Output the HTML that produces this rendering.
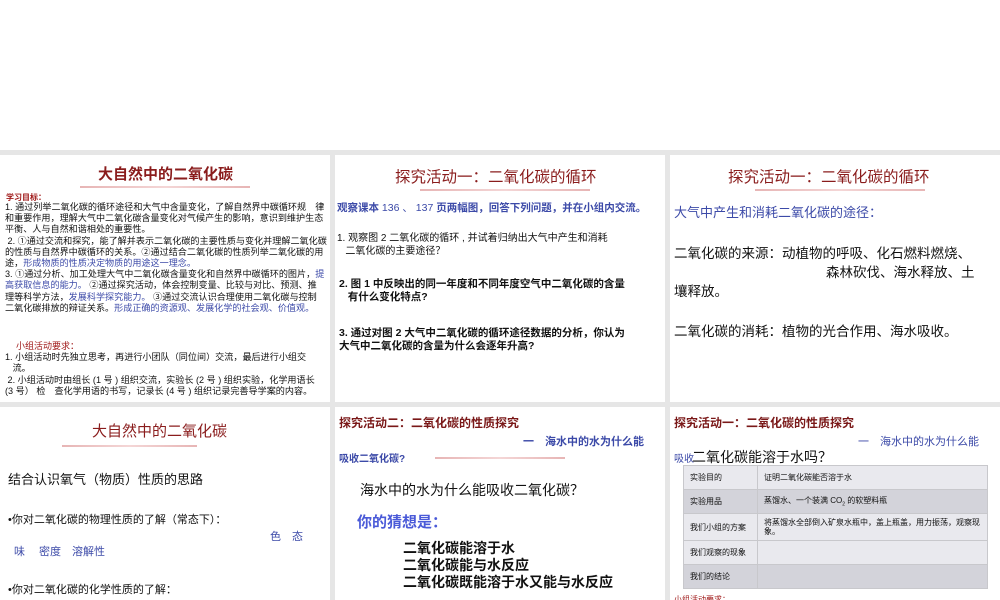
<!DOCTYPE html>
<html><head><meta charset="utf-8"><style>
*{margin:0;padding:0;box-sizing:border-box}
body{width:1000px;height:600px;overflow:hidden;background:#fff;position:relative;font-family:"Liberation Sans","Noto Sans CJK SC",sans-serif;color:#111}
.bg{position:absolute;left:0;top:150px;width:1000px;height:450px;background:#e6e6e6}
.s{position:absolute;background:#fff;overflow:hidden}
.a{position:absolute;white-space:nowrap}
.t{color:#8a1c1c;font-size:15px}
.u{position:absolute;height:2px;background:linear-gradient(90deg,#e7b5b5,#f4d6d6,#e7b5b5)}
.blue{color:#3c4aa8}
.red{color:#a01a1a}
.nw{white-space:nowrap}
table{border-collapse:collapse;font-size:8px}
td{border:1px solid #c8c8cc;height:24px;padding:0 6px}
</style></head><body>
<div class="bg"></div>

<div class="s" style="left:0;top:155px;width:330px;height:247px">
<div class="a t" style="left:98px;top:8px;font-weight:bold">大自然中的二氧化碳</div>
<div class="u" style="left:80px;top:31px;width:170px"></div>
<div class="a red" style="left:6px;top:37px;font-size:8px;font-weight:bold">学习目标：</div>
<div class="nw" style="position:absolute;left:5px;top:47px;font-size:9.1px;line-height:11.2px">
1. 通过列举二氧化碳的循环途径和大气中含量变化，了解自然界中碳循环规　律<br>
和重要作用，理解大气中二氧化碳含量变化对气候产生的影响，意识到维护生态<br>
平衡、人与自然和谐相处的重要性。<br>
&nbsp;2. ①通过交流和探究，能了解并表示二氧化碳的主要性质与变化并理解二氧化碳<br>
的性质与自然界中碳循环的关系。②通过结合二氧化碳的性质列举二氧化碳的用<br>
途，<span class="blue">形成物质的性质决定物质的用途这一理念。</span><br>
3. ①通过分析、加工处理大气中二氧化碳含量变化和自然界中碳循环的图片，<span class="blue">提</span><br>
<span class="blue">高获取信息的能力。</span> ②通过探究活动，体会控制变量、比较与对比、预测、推<br>
理等科学方法，<span class="blue">发展科学探究能力。</span> ③通过交流认识合理使用二氧化碳与控制<br>
二氧化碳排放的辩证关系。<span class="blue">形成正确的资源观、发展化学的社会观、价值观。</span></div>
<div class="a red" style="left:16px;top:184px;font-size:9px">小组活动要求：</div>
<div class="nw" style="position:absolute;left:5px;top:197px;font-size:9.1px;line-height:11.3px">1. 小组活动时先独立思考，再进行小团队（同位间）交流，最后进行小组交<br>&nbsp;&nbsp;&nbsp;流。<br>&nbsp;2. 小组活动时由组长 (1 号 ) 组织交流，实验长 (2 号 ) 组织实验，化学用语长<br>(3 号） 检　查化学用语的书写，记录长 (4 号 ) 组织记录完善导学案的内容。</div>
</div>

<div class="s" style="left:335px;top:155px;width:330px;height:247px">
<div class="a t" style="left:60px;top:10px;font-size:15.5px">探究活动一：二氧化碳的循环</div>
<div class="u" style="left:85px;top:34px;width:170px"></div>
<div class="a blue" style="left:2px;top:45px;font-size:10.5px;font-weight:bold">观察课本 <span style="font-weight:normal">136 、 137</span> 页两幅图，回答下列问题，并在小组内交流。</div>
<div style="position:absolute;left:2px;top:78px;width:326px;font-size:10px;line-height:12.5px">1. 观察图 2 二氧化碳的循环 , 并试着归纳出大气中产生和消耗<br>&nbsp;&nbsp;&nbsp;二氧化碳的主要途径？</div>
<div style="position:absolute;left:4px;top:123px;width:326px;font-size:10.5px;line-height:13px;font-weight:bold">2. 图 1 中反映出的同一年度和不同年度空气中二氧化碳的含量<br>&nbsp;&nbsp;&nbsp;有什么变化特点?</div>
<div style="position:absolute;left:4px;top:172px;width:326px;font-size:10.5px;line-height:13px;font-weight:bold">3. 通过对图 2 大气中二氧化碳的循环途径数据的分析，你认为<br>大气中二氧化碳的含量为什么会逐年升高?</div>
</div>

<div class="s" style="left:670px;top:155px;width:330px;height:247px">
<div class="a t" style="left:58px;top:10px;font-size:15.5px">探究活动一：二氧化碳的循环</div>
<div class="u" style="left:85px;top:34px;width:170px"></div>
<div class="a blue" style="left:4px;top:47px;font-size:13px">大气中产生和消耗二氧化碳的途径：</div>
<div style="position:absolute;left:4px;top:89px;width:326px;font-size:13.5px;line-height:19px">二氧化碳的来源：动植物的呼吸、化石燃料燃烧、<br><span style="padding-left:152px">森林砍伐、海水释放、土</span><br>壤释放。</div>
<div class="a" style="left:4px;top:165px;font-size:13.5px">二氧化碳的消耗：植物的光合作用、海水吸收。</div>
</div>

<div class="s" style="left:0;top:407px;width:330px;height:193px">
<div class="a t" style="left:92px;top:13px;font-size:15px">大自然中的二氧化碳</div>
<div class="u" style="left:62px;top:38px;width:135px"></div>
<div class="a" style="left:8px;top:62px;font-size:13px">结合认识氧气（物质）性质的思路</div>
<div class="a" style="left:8px;top:104px;font-size:11px">•你对二氧化碳的物理性质的了解（常态下）：</div>
<div class="a blue" style="left:270px;top:121px;font-size:11px">色　态</div>
<div class="a blue" style="left:14px;top:136px;font-size:11px">味　 密度　溶解性</div>
<div class="a" style="left:8px;top:174px;font-size:11px">•你对二氧化碳的化学性质的了解：</div>
</div>

<div class="s" style="left:335px;top:407px;width:330px;height:193px">
<div class="a" style="left:4px;top:7px;font-size:12px;font-weight:bold;color:#7a1818">探究活动二：二氧化碳的性质探究</div>
<div class="a blue" style="left:188px;top:26px;font-size:11px;font-weight:bold">一　海水中的水为什么能</div>
<div class="a blue" style="left:4px;top:43px;font-size:10px;font-weight:bold">吸收二氧化碳?</div>
<div class="u" style="left:100px;top:50px;width:130px"></div>
<div class="a" style="left:25px;top:73px;font-size:14px">海水中的水为什么能吸收二氧化碳？</div>
<div class="a" style="left:22px;top:104px;font-size:15px;font-weight:bold;color:#4a5ad8">你的猜想是：</div>
<div style="position:absolute;left:68px;top:133px;font-size:14px;line-height:17px;font-weight:bold">二氧化碳能溶于水<br>二氧化碳能与水反应<br>二氧化碳既能溶于水又能与水反应</div>
</div>

<div class="s" style="left:670px;top:407px;width:330px;height:193px">
<div class="a" style="left:4px;top:7px;font-size:12px;font-weight:bold;color:#7a1818">探究活动一：二氧化碳的性质探究</div>
<div class="a blue" style="left:188px;top:26px;font-size:11px">一　海水中的水为什么能</div>
<div class="a blue" style="left:4px;top:43px;font-size:10px">吸收</div>
<div class="a" style="left:22px;top:40px;font-size:14px">二氧化碳能溶于水吗？</div>
<div style="position:absolute;left:13px;top:58px">
<table>
<tr style="background:#e9e9ee"><td style="width:74px">实验目的</td><td style="width:230px">证明二氧化碳能否溶于水</td></tr>
<tr style="background:#d3d3da"><td>实验用品</td><td>蒸馏水、一个装满 CO<sub style="font-size:5px">2</sub> 的软塑料瓶</td></tr>
<tr style="background:#e9e9ee"><td style="height:27px">我们小组的方案</td><td style="line-height:9px">将蒸馏水全部倒入矿泉水瓶中，盖上瓶盖，用力振荡，观察现象。</td></tr>
<tr style="background:#e9e9ee"><td>我们观察的现象</td><td></td></tr>
<tr style="background:#d3d3da"><td>我们的结论</td><td></td></tr>
</table></div>
<div class="a red" style="left:4px;top:187px;font-size:8px">小组活动要求：</div>
</div>
</body></html>
